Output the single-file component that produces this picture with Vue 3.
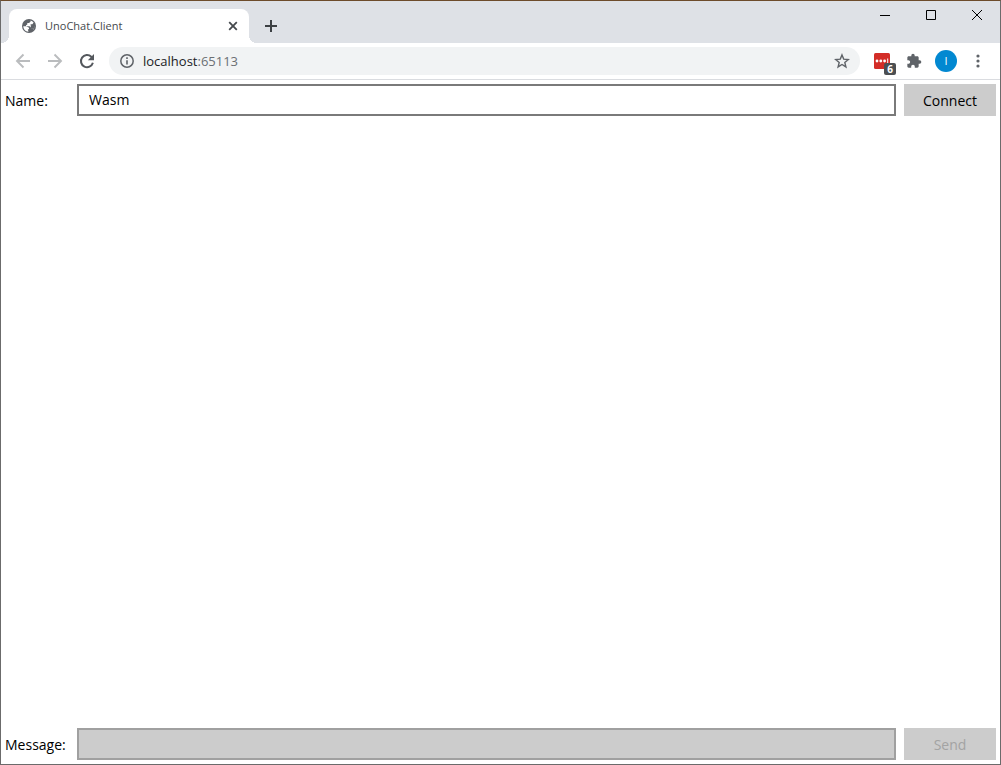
<script setup>
import { ref } from 'vue'

const name = ref('Wasm')
const message = ref('')
const address = ref('localhost:65113')
</script>

<template>
  <div class="window">
    <header class="titlebar">
      <div class="tab">
        <svg class="globe" viewBox="0 0 16 16" width="16" height="16" aria-hidden="true">
          <circle cx="8" cy="8" r="7" fill="#5f6368" />
          <path d="M9.500 2.500v1.300L8 5H6.300v1.500L5 7.300v.9h3.500l1.500 1.300v1h1.500l1 .9c.7-.8 1.200-2 1.200-3.200H10.800L9.600 7.500V6.200h1.800l1.200-1.700C11.800 3.500 10.700 2.800 9.500 2.500Z" fill="#fff" />
          <path d="M2.300 8.200H5.500L8 9.800v1.400H6.800L7.500 13.700C4.500 13.500 2.300 11.200 2.300 8.200Z" fill="#fff" />
          <path d="M9.800 8h4v2.800H9.800Z" fill="#5f6368" />
        </svg>
        <span class="tab-title">UnoChat.Client</span>
        <button class="bare tab-close" aria-label="Close tab">
          <svg viewBox="0 0 10 10" width="10" height="10"><path d="m1.200 1.200 7.600 7.600m0-7.600-7.600 7.600" stroke="#45494d" stroke-width="1.800" /></svg>
        </button>
      </div>
      <button class="bare new-tab" aria-label="New tab">
        <svg viewBox="0 0 12 12" width="12" height="12"><path d="M6 0v12M0 6h12" stroke="#3c4043" stroke-width="2" /></svg>
      </button>
      <div class="controls">
        <button class="bare control" aria-label="Minimize">
          <svg viewBox="0 0 10 10" width="10" height="10"><path d="M0 5.500h10" stroke="#000" /></svg>
        </button>
        <button class="bare control" aria-label="Maximize">
          <svg viewBox="0 0 10 10" width="10" height="10"><path d="M.5.500h9v9h-9z" fill="none" stroke="#000" /></svg>
        </button>
        <button class="bare control" aria-label="Close window">
          <svg viewBox="0 0 10 10" width="10" height="10"><path d="m0 0 10 10M10 0 0 10" stroke="#000" /></svg>
        </button>
      </div>
    </header>

    <nav class="toolbar">
      <div class="nav-buttons">
        <button class="bare nav-button" aria-label="Back">
          <svg viewBox="0 0 16 16" width="16" height="16"><path d="M15 8H2m6.500-6.500L2 8l6.500 6.500" fill="none" stroke="#babcbe" stroke-width="1.900" /></svg>
        </button>
        <button class="bare nav-button" aria-label="Forward">
          <svg viewBox="0 0 16 16" width="16" height="16"><path d="M1 8h13M7.500 1.500 14 8l-6.500 6.500" fill="none" stroke="#babcbe" stroke-width="1.900" /></svg>
        </button>
        <button class="bare nav-button" aria-label="Reload">
          <svg viewBox="0 0 16 16" width="16" height="16">
            <path d="M13.900 9.800A6.100 6.100 0 1 1 12.300 3.700L13.300 4.700" fill="none" stroke="#54585d" stroke-width="2" />
            <path d="M15 1v6.200H8.800Z" fill="#54585d" />
          </svg>
        </button>
      </div>
      <div class="omnibox">
        <svg viewBox="0 0 14 14" width="14" height="14" aria-hidden="true">
          <circle cx="7" cy="7" r="6.200" fill="none" stroke="#5f6368" stroke-width="1.500" />
          <path d="M7 6.200v4.300M7 3.300v1.600" stroke="#5f6368" stroke-width="1.600" />
        </svg>
        <a class="address" :href="'http://' + address">{{ address.split(':')[0] }}<span class="port">:{{ address.split(':')[1] }}</span></a>
        <button class="bare star" aria-label="Bookmark this page">
          <svg viewBox="0 0 16 16" width="16" height="16"><path d="m8 1.900 1.700 4.200 4.600.4-3.500 3 1.100 4.400L8 11.500l-3.900 2.400 1.100-4.400-3.500-3 4.600-.4Z" fill="none" stroke="#5f6368" stroke-width="1.400" /></svg>
        </button>
      </div>
      <div class="extensions">
        <button class="bare extension" aria-label="Password extension">
          <svg viewBox="0 0 16 16" width="16" height="16">
            <rect width="16" height="16" rx="1.500" fill="#d32d27" />
            <g fill="#fff"><circle cx="3" cy="8" r="1.400" /><circle cx="6.800" cy="8" r="1.400" /><circle cx="10.600" cy="8" r="1.400" /><path d="M13.200 5.500h1v5h-1z" /></g>
          </svg>
          <span class="badge">6</span>
        </button>
        <button class="bare extension" aria-label="Extensions">
          <svg viewBox="0 0 24 24" width="16" height="16"><path fill="#5f6368" d="M20.500 11H19V7c0-1.100-.9-2-2-2h-4V3.500a2.500 2.500 0 0 0-5 0V5H4c-1.100 0-1.990.9-1.990 2v3.800H3.500c1.490 0 2.700 1.210 2.700 2.700s-1.210 2.700-2.700 2.700H2V20c0 1.100.9 2 2 2h3.800v-1.500c0-1.490 1.210-2.700 2.700-2.700s2.700 1.210 2.700 2.700V22H17c1.100 0 2-.9 2-2v-4h1.500a2.500 2.500 0 0 0 0-5Z" /></svg>
        </button>
        <button class="bare extension" aria-label="Profile"><span class="avatar">I</span></button>
        <button class="bare extension" aria-label="Menu">
          <svg viewBox="0 0 4 14" width="4" height="14"><g fill="#5f6368"><circle cx="2" cy="2" r="1.600" /><circle cx="2" cy="7" r="1.600" /><circle cx="2" cy="12" r="1.600" /></g></svg>
        </button>
      </div>
    </nav>

    <main class="chat">
      <form class="row" @submit.prevent>
        <label for="name">Name:</label>
        <input id="name" v-model="name" type="text" class="field" />
        <button class="action">Connect</button>
      </form>
      <div class="messages"></div>
      <form class="row" @submit.prevent>
        <label for="message">Message:</label>
        <input id="message" v-model="message" type="text" class="field" disabled />
        <button class="action" disabled>Send</button>
      </form>
    </main>
  </div>
</template>

<style>
body {
  margin: 0;
}
</style>

<style scoped>
.window {
  box-sizing: border-box;
  min-height: 100vh;
  display: flex;
  flex-direction: column;
  border: 1px solid #6b6b6b;
  border-top-color: #6d4c2b;
  background: #fff;
  color: #000;
  font-family: "Open Sans", "Noto Sans", sans-serif;
  font-size: 14px;
}

.bare {
  display: flex;
  align-items: center;
  justify-content: center;
  padding: 0;
  border: 0;
  background: none;
  font: inherit;
}

svg {
  display: block;
  flex: none;
}

.titlebar {
  display: flex;
  align-items: flex-end;
  height: 42px;
  padding-left: 8px;
  background: #dee1e6;
}

.tab {
  position: relative;
  box-sizing: border-box;
  display: flex;
  align-items: center;
  width: 240px;
  height: 34px;
  padding: 0 8px 0 12px;
  border-radius: 8px 8px 0 0;
  background: #fff;
}

.tab::before,
.tab::after {
  content: "";
  position: absolute;
  bottom: 0;
  width: 8px;
  height: 8px;
}

.tab::before {
  right: 100%;
  background: radial-gradient(circle at 0 0, #dee1e6 8px, #fff 8px);
}

.tab::after {
  left: 100%;
  background: radial-gradient(circle at 100% 0, #dee1e6 8px, #fff 8px);
}

.tab-title {
  flex: 1;
  margin-left: 8px;
  color: #45494d;
  font-size: 11px;
  line-height: 16px;
}

.tab-close {
  width: 16px;
  height: 16px;
}

.new-tab {
  width: 28px;
  height: 34px;
  margin-left: 8px;
}

.controls {
  display: flex;
  align-self: flex-start;
  margin-left: auto;
}

.control {
  width: 46px;
  height: 28px;
}

.toolbar {
  display: flex;
  align-items: center;
  height: 36px;
  border-bottom: 1px solid #dadce0;
}

.nav-buttons {
  display: flex;
  padding: 0 6px;
}

.nav-button {
  width: 32px;
  height: 28px;
}

.omnibox {
  display: flex;
  flex: 1;
  align-items: center;
  height: 28px;
  padding: 0 10px 0 11px;
  border-radius: 14px;
  background: #f1f3f4;
}

.address {
  flex: 1;
  margin-left: 9px;
  color: #202124;
  font-size: 13px;
  line-height: 18px;
  text-decoration: none;
}

.port {
  color: #6b6f73;
}

.extensions {
  display: flex;
  padding: 0 6px;
}

.extension {
  position: relative;
  width: 32px;
  height: 28px;
}

.badge {
  position: absolute;
  right: 2px;
  bottom: 0;
  width: 12px;
  height: 12px;
  border-radius: 2px;
  background: #4c4f52;
  color: #fff;
  font-size: 10px;
  font-weight: 700;
  line-height: 12px;
  text-align: center;
}

.avatar {
  width: 22px;
  height: 22px;
  border-radius: 50%;
  background: #0288d1;
  color: #fff;
  font-size: 11px;
  line-height: 22px;
}

.chat {
  display: flex;
  flex: 1;
  flex-direction: column;
  padding: 4px;
}

.row {
  display: grid;
  grid-template-columns: 64px 1fr 92px;
  column-gap: 8px;
  align-items: center;
}

label {
  font-weight: 500;
  line-height: 32px;
  padding-top: 1px;
  margin-bottom: -1px;
}

.field {
  box-sizing: border-box;
  width: 100%;
  height: 32px;
  padding: 0 10px 2px;
  border: 2px solid #7a7a7a;
  border-radius: 0;
  background: #fff;
  color: #000;
  font: inherit;
}

.field:disabled {
  border-color: #a0a0a0;
  background: #ccc;
}

.action {
  height: 32px;
  padding: 0;
  border: 0;
  background: #ccc;
  color: #000;
  font: inherit;
}

.action:disabled {
  color: #a3a3a3;
}

.messages {
  flex: 1;
}
</style>
